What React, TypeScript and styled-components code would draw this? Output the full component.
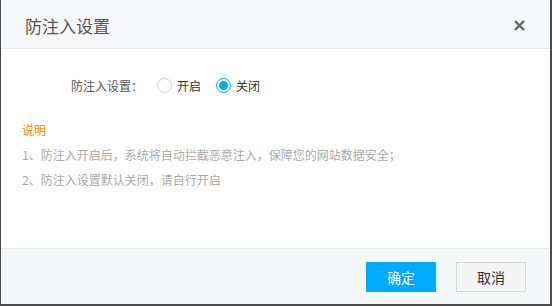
import React from 'react';
import styled, { createGlobalStyle } from 'styled-components';

const COLORS = {
  frame: '#4b4b4b',
  headerBg: '#f7f8fa',
  footerBg: '#f4f8f9',
  line: '#e6e8ea',
  title: '#555555',
  text: '#333333',
  muted: '#aaaaaa',
  orange: '#ff8800',
  blue: '#00aaff',
};

const FONT = '"Microsoft YaHei", "Noto Sans CJK SC", "Noto Sans", sans-serif';

const GlobalStyle = createGlobalStyle`
  html, body {
    margin: 0;
    padding: 0;
    background: #ffffff;
  }
  body {
    font-family: ${FONT};
  }
`;

const Dialog = styled.div`
  width: 552px;
  height: 306px;
  box-sizing: border-box;
  display: flex;
  flex-direction: column;
  background: #ffffff;
  border-left: 1px solid ${COLORS.frame};
  border-right: 2px solid ${COLORS.frame};
  border-bottom: 2px solid ${COLORS.frame};
`;

const Header = styled.div`
  height: 48px;
  flex: none;
  display: flex;
  align-items: center;
  justify-content: space-between;
  padding: 0 24px 0 24px;
  background: ${COLORS.headerBg};
  border-bottom: 1px solid ${COLORS.line};
`;

const Title = styled.h2`
  margin: 0;
  font-size: 17px;
  font-weight: normal;
  color: ${COLORS.title};
  padding-top: 2px;
`;

const CloseButton = styled.button`
  border: none;
  background: none;
  padding: 0;
  width: 14px;
  height: 14px;
  display: flex;
  align-items: center;
  justify-content: center;
  cursor: pointer;
  margin-top: 3px;
`;

const Body = styled.div`
  flex: 1;
  padding: 26px 21px 0 21px;
  font-size: 12px;
`;

const SettingRow = styled.div`
  display: flex;
  align-items: center;
  height: 20px;
  padding-left: 49px;
  color: ${COLORS.text};
`;

const Label = styled.span`
  color: #555555;
  width: 86px;
`;

const RadioOption = styled.label`
  display: flex;
  align-items: center;
  margin-right: 15px;
  cursor: pointer;
  color: ${COLORS.text};
`;

const RadioCircle = styled.span<{ $checked?: boolean }>`
  box-sizing: border-box;
  width: 15px;
  height: 15px;
  border-radius: 50%;
  border: 1px solid ${(p) => (p.$checked ? COLORS.blue : '#d0d0d0')};
  background: #ffffff;
  margin-right: 5px;
  display: flex;
  align-items: center;
  justify-content: center;

  &::after {
    content: '';
    display: ${(p) => (p.$checked ? 'block' : 'none')};
    width: 9px;
    height: 9px;
    border-radius: 50%;
    background: ${COLORS.blue};
  }
`;

const Notes = styled.div`
  margin-top: 22px;
  line-height: 25px;
`;

const NoteTitle = styled.div`
  color: ${COLORS.orange};
`;

const NoteLine = styled.div`
  color: ${COLORS.muted};
`;

const Footer = styled.div`
  height: 55px;
  flex: none;
  display: flex;
  align-items: center;
  justify-content: flex-end;
  gap: 20px;
  padding-right: 24px;
  background: ${COLORS.footerBg};
  border-top: 1px solid ${COLORS.line};
`;

const Button = styled.button<{ $primary?: boolean }>`
  width: 70px;
  height: 30px;
  box-sizing: border-box;
  font-family: ${FONT};
  font-size: 14px;
  cursor: pointer;
  border: 1px solid ${(p) => (p.$primary ? COLORS.blue : '#d6d6d6')};
  background: ${(p) => (p.$primary ? COLORS.blue : '#f5f5f5')};
  color: ${(p) => (p.$primary ? '#ffffff' : COLORS.text)};
`;

export default function App() {
  return (
    <>
      <GlobalStyle />
      <Dialog>
        <Header>
          <Title>防注入设置</Title>
          <CloseButton aria-label="关闭">
            <svg width="11" height="11" viewBox="0 0 11 11">
              <path d="M1 1 L10 10 M10 1 L1 10" stroke="#666666" strokeWidth="2.4" />
            </svg>
          </CloseButton>
        </Header>
        <Body>
          <SettingRow>
            <Label>防注入设置：</Label>
            <RadioOption>
              <RadioCircle />
              开启
            </RadioOption>
            <RadioOption>
              <RadioCircle $checked />
              关闭
            </RadioOption>
          </SettingRow>
          <Notes>
            <NoteTitle>说明</NoteTitle>
            <NoteLine>1、防注入开启后，系统将自动拦截恶意注入，保障您的网站数据安全；</NoteLine>
            <NoteLine>2、防注入设置默认关闭，请自行开启</NoteLine>
          </Notes>
        </Body>
        <Footer>
          <Button $primary>确定</Button>
          <Button>取消</Button>
        </Footer>
      </Dialog>
    </>
  );
}
